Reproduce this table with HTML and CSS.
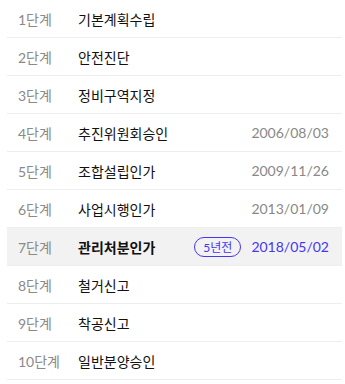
FILE: index.html
```html
<!DOCTYPE html>
<html lang="ko">
<head>
<meta charset="utf-8">
<link rel="stylesheet" href="styles.css">
</head>
<body>
<ul class="steps">
  <li class="step"><span class="label">1단계</span><span class="title">기본계획수립</span></li>
  <li class="step"><span class="label">2단계</span><span class="title">안전진단</span></li>
  <li class="step"><span class="label">3단계</span><span class="title">정비구역지정</span></li>
  <li class="step"><span class="label">4단계</span><span class="title">추진위원회승인</span><span class="date">2006/08/03</span></li>
  <li class="step"><span class="label">5단계</span><span class="title">조합설립인가</span><span class="date">2009/11/26</span></li>
  <li class="step"><span class="label">6단계</span><span class="title">사업시행인가</span><span class="date">2013/01/09</span></li>
  <li class="step current"><span class="label">7단계</span><span class="title">관리처분인가</span><span class="badge">5년전</span><span class="date">2018/05/02</span></li>
  <li class="step"><span class="label">8단계</span><span class="title">철거신고</span></li>
  <li class="step"><span class="label">9단계</span><span class="title">착공신고</span></li>
  <li class="step"><span class="label">10단계</span><span class="title">일반분양승인</span></li>
</ul>
</body>
</html>
```

FILE: styles.css
```css
html, body {
  margin: 0;
  padding: 0;
  background: #fff;
}
body {
  font-family: Lato, "Noto Sans CJK KR", sans-serif;
}
.steps {
  list-style: none;
  margin: 0 0 0 7px;
  padding: 0;
  width: 335px;
}
.step {
  display: flex;
  align-items: center;
  height: 37px;
  border-bottom: 1px solid #eeeeee;
  padding: 0 13px 0 11px;
}
.label {
  width: 60px;
  flex: none;
  font-size: 14px;
  color: #8a8a8a;
}
.title {
  flex: 1;
  font-size: 14px;
  color: #111;
}
.date {
  font-size: 14px;
  color: #888;
}
.current {
  background: #f2f2f2;
}
.current .title {
  font-weight: 700;
}
.current .date {
  color: #4636f0;
}
.badge {
  box-sizing: border-box;
  height: 20px;
  width: 47px;
  display: flex;
  align-items: center;
  justify-content: center;
  border: 1px solid #4636f0;
  border-radius: 10px;
  color: #4636f0;
  font-size: 12px;
  margin-right: 10px;
}
```
